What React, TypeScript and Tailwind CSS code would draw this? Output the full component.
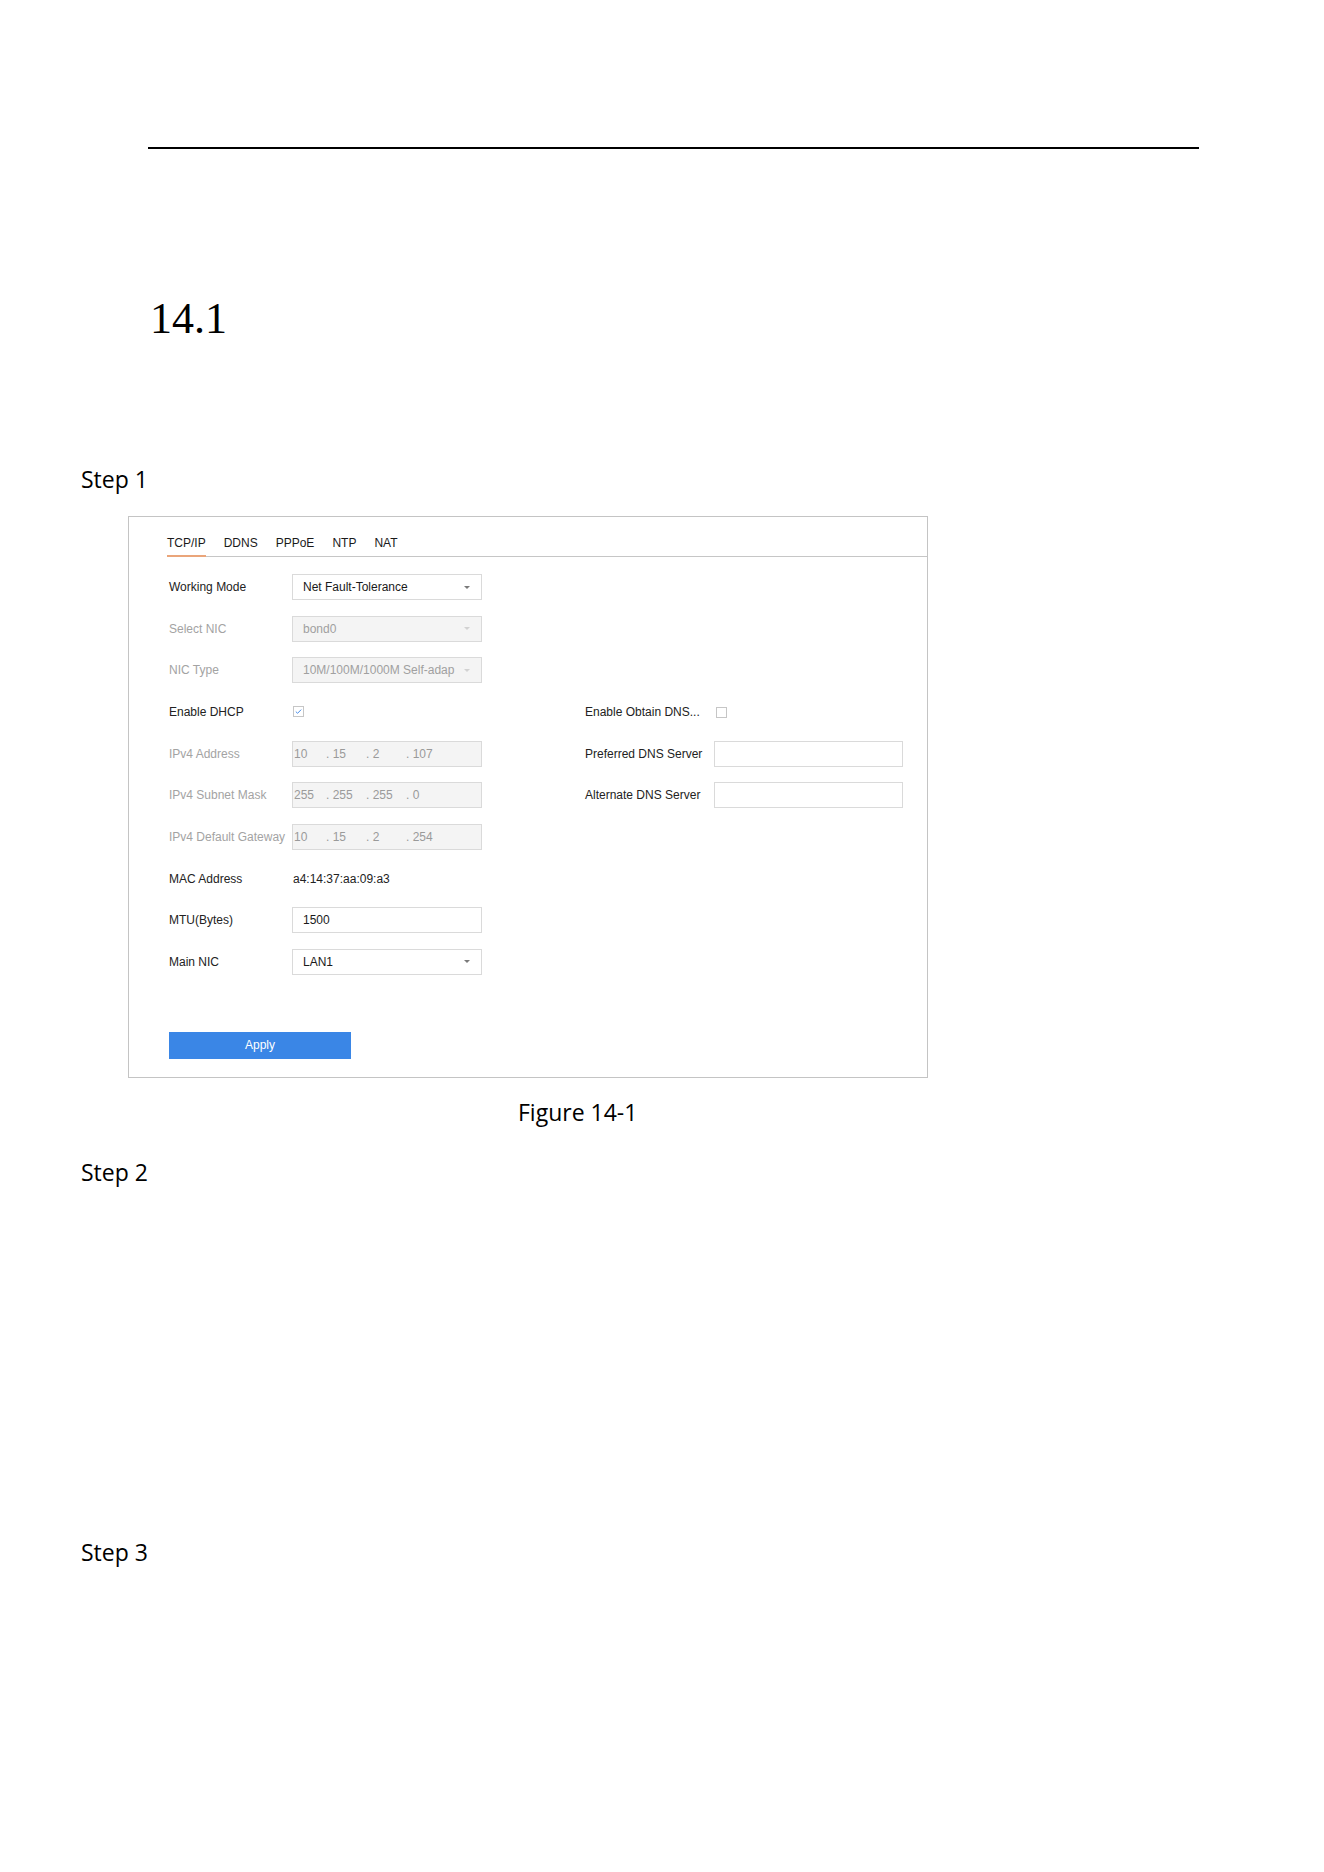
import React from "react";

const ui = "font-['Liberation_Sans',Arial,sans-serif] text-[12px]";
const body = "font-['Open_Sans','Noto_Sans',sans-serif] text-[23px] leading-[23px]";

const tabs = ["TCP/IP", "DDNS", "PPPoE", "NTP", "NAT"];

function Caret({ off }: { off?: boolean }) {
    return (
        <svg width="6" height="3" viewBox="0 0 6 3" className="ml-auto mr-[11px] shrink-0">
            <path d="M0 0h6L3 3z" fill={off ? "#d2d2d2" : "#7a7a7a"} />
        </svg>
    );
}

function Label({ text, off, w = "w-[123px]" }: { text: string; off?: boolean; w?: string }) {
    return (
        <span className={`${w} shrink-0 whitespace-nowrap ${off ? "text-[#a3a3a3]" : "text-[#222]"}`}>
            {text}
        </span>
    );
}

function Select({ value, off }: { value: string; off?: boolean }) {
    return (
        <div
            className={`w-[190px] h-[26px] flex items-center border border-[#dadada] pl-[10px] ${
                off ? "bg-[#f4f4f4] text-[#a0a0a0]" : "bg-white text-[#1a1a1a]"
            }`}
        >
            <span className="whitespace-nowrap">{value}</span>
            <Caret off={off} />
        </div>
    );
}

function IpBox({ parts }: { parts: string[] }) {
    // four octets, dots drawn between them like the device UI does
    return (
        <div className="w-[190px] h-[26px] flex items-center border border-[#dadada] bg-[#f4f4f4] text-[#9a9a9a] pl-[1px]">
            <span className="w-[32px]">{parts[0]}</span>
            {parts.slice(1).map((p, i) => (
                <span key={i} className="w-[40px] whitespace-pre">{`. ${p}`}</span>
            ))}
        </div>
    );
}

function Check({ on }: { on?: boolean }) {
    return (
        <div className="w-[11px] h-[11px] border border-[#c6c6c6] bg-white flex items-center justify-center">
            {on && (
                <svg width="9" height="9" viewBox="0 0 9 9">
                    <path d="M1.8 4.6 3.6 6.3 7.2 2.6" fill="none" stroke="#4a8ee8" strokeWidth="1" />
                </svg>
            )}
        </div>
    );
}

function Row({ children }: { children: React.ReactNode }) {
    return <div className="h-[26px] flex items-center">{children}</div>;
}

function NetworkPanel() {
    return (
        <div className={`${ui} mt-[25px] ml-[128px] w-[800px] border border-[#c4c4c4] pt-[15px] pl-[38px] pb-[18px]`}>
            <div className="h-[25px] flex gap-[18px] border-b border-[#c6c6c6]">
                {tabs.map((t, i) => (
                    <div
                        key={t}
                        className={`h-[25px] -mb-px leading-[23px] text-[#1a1a1a] ${
                            i === 0 ? "border-b-2 border-[#eaa57a]" : ""
                        }`}
                    >
                        {t}
                    </div>
                ))}
            </div>

            <div className="mt-[17px] ml-[2px] flex">
                <div className="w-[313px] flex flex-col gap-[15.67px]">
                    <Row>
                        <Label text="Working Mode" />
                        <Select value="Net Fault-Tolerance" />
                    </Row>
                    <Row>
                        <Label text="Select NIC" off />
                        <Select value="bond0" off />
                    </Row>
                    <Row>
                        <Label text="NIC Type" off />
                        <Select value="10M/100M/1000M Self-adap" off />
                    </Row>
                    <Row>
                        <Label text="Enable DHCP" />
                        <div className="ml-[1px]">
                            <Check on />
                        </div>
                    </Row>
                    <Row>
                        <Label text="IPv4 Address" off />
                        <IpBox parts={["10", "15", "2", "107"]} />
                    </Row>
                    <Row>
                        <Label text="IPv4 Subnet Mask" off />
                        <IpBox parts={["255", "255", "255", "0"]} />
                    </Row>
                    <Row>
                        <Label text="IPv4 Default Gateway" off />
                        <IpBox parts={["10", "15", "2", "254"]} />
                    </Row>
                    <Row>
                        <Label text="MAC Address" />
                        <span className="text-[#222] ml-[1px]">a4:14:37:aa:09:a3</span>
                    </Row>
                    <Row>
                        <Label text="MTU(Bytes)" />
                        <div className="w-[190px] h-[26px] flex items-center border border-[#dadada] pl-[10px] text-[#1a1a1a]">
                            1500
                        </div>
                    </Row>
                    <Row>
                        <Label text="Main NIC" />
                        <Select value="LAN1" />
                    </Row>
                </div>

                <div className="ml-[103px] mt-[125px] flex flex-col gap-[15.67px]">
                    <Row>
                        <Label text="Enable Obtain DNS..." w="w-[129px]" />
                        <div className="ml-[2px]">
                            <Check />
                        </div>
                    </Row>
                    <Row>
                        <Label text="Preferred DNS Server" w="w-[129px]" />
                        <div className="w-[189px] h-[26px] border border-[#dadada] bg-white" />
                    </Row>
                    <Row>
                        <Label text="Alternate DNS Server" w="w-[129px]" />
                        <div className="w-[189px] h-[26px] border border-[#dadada] bg-white" />
                    </Row>
                </div>
            </div>

            <button className="mt-[57px] ml-[2px] w-[182px] h-[27px] bg-[#3a86e6] text-white">Apply</button>
        </div>
    );
}

export default function App() {
    return (
        <div className="w-[1324px] h-[1872px] bg-white text-black pt-[147px]">
            <div className="ml-[148px] w-[1051px] h-[2px] bg-black" />
            <h2 className="mt-[148px] ml-[150px] font-['Liberation_Serif',serif] text-[44px] leading-[44px]">14.1</h2>
            <p className={`${body} mt-[127px] ml-[81px]`}>Step 1</p>
            <NetworkPanel />
            <p className={`${body} mt-[23px] ml-[518px]`}>Figure 14-1</p>
            <p className={`${body} mt-[37px] ml-[81px]`}>Step 2</p>
            <p className={`${body} mt-[357px] ml-[81px]`}>Step 3</p>
        </div>
    );
}
